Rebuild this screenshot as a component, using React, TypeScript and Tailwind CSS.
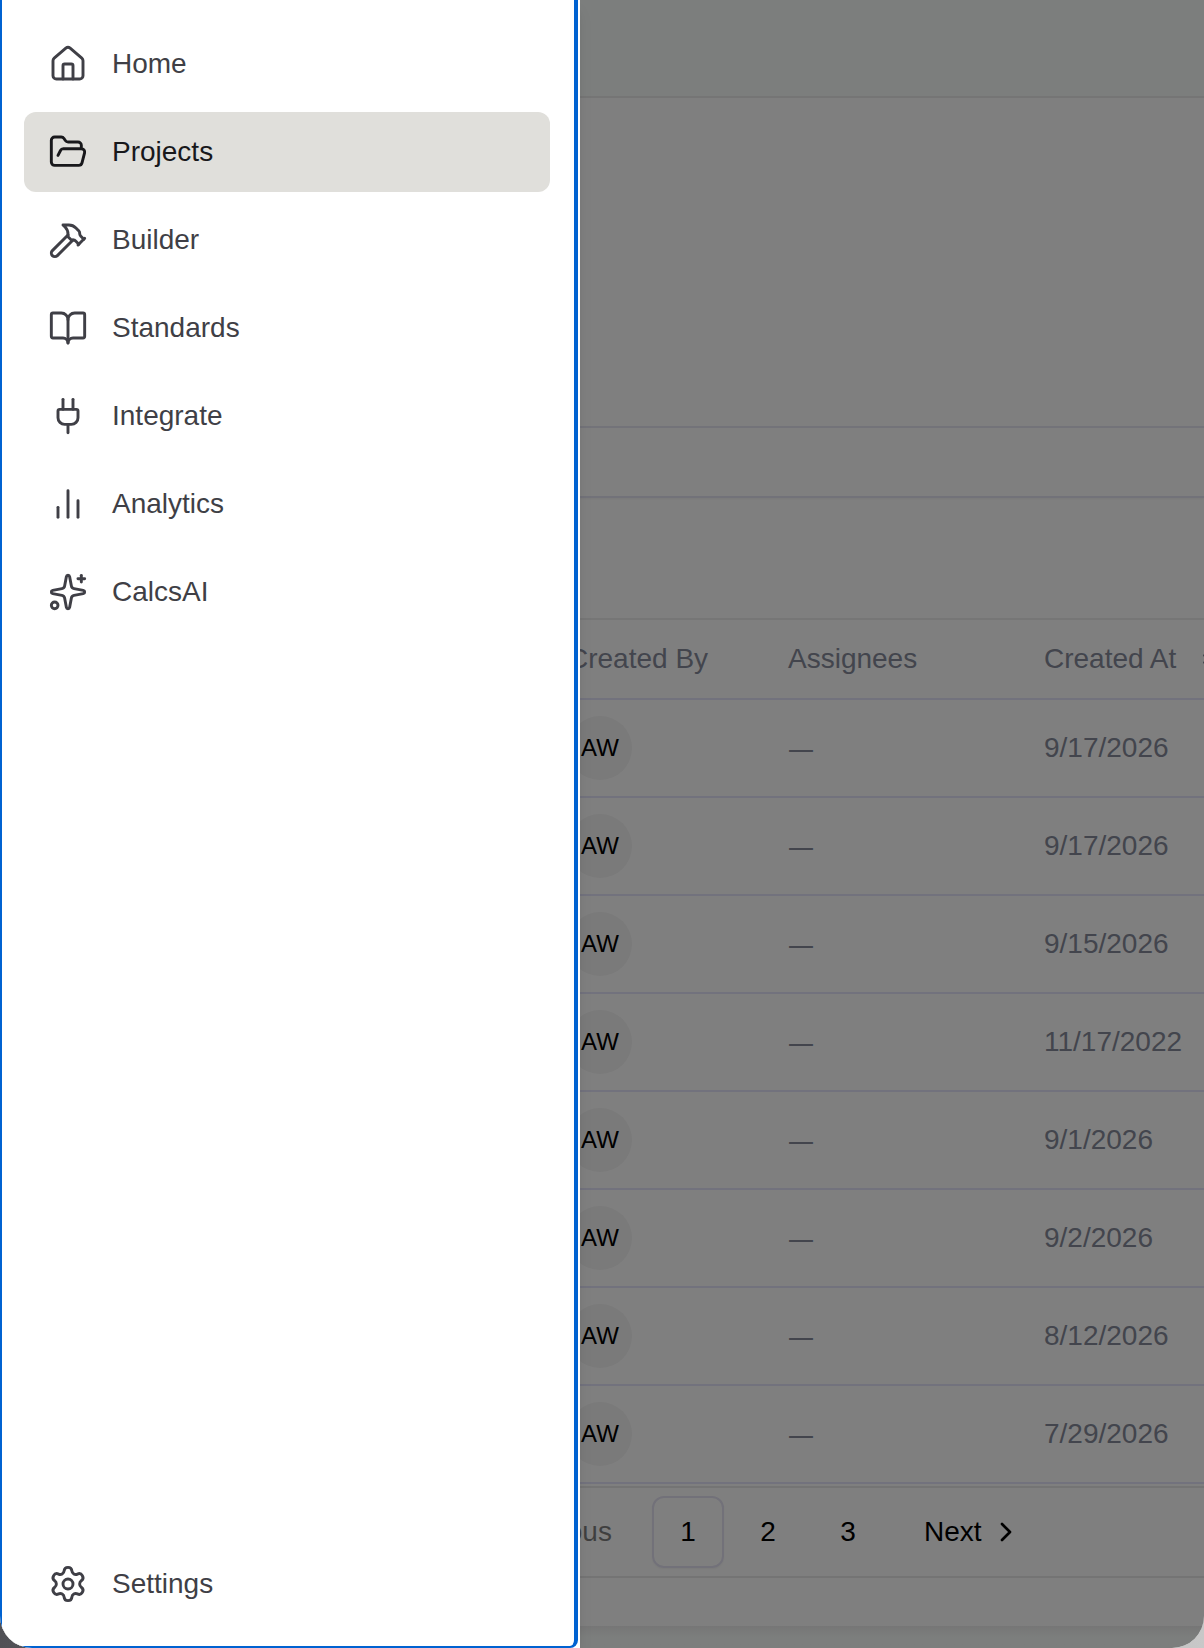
import React from 'react';
import {
  BookOpen,
  ChevronLeft,
  ChevronRight,
  ChevronsUpDown,
  FolderOpen,
  Hammer,
  House,
  Plug,
  Settings,
  Sparkles
} from 'lucide-react';

interface IconProps {
  className?: string;
  strokeWidth?: number;
}

interface NavItemProps {
  label: string;
  icon: React.ElementType<IconProps>;
  active?: boolean;
}

function BarsIcon({ className, strokeWidth = 2 }: IconProps) {
  return (
    <svg
      className={className}
      viewBox="0 0 24 24"
      fill="none"
      stroke="currentColor"
      strokeWidth={strokeWidth}
      strokeLinecap="round"
      strokeLinejoin="round"
      aria-hidden="true"
    >
      <path d="M18 20V10" />
      <path d="M12 20V4" />
      <path d="M6 20v-6" />
    </svg>
  );
}

const navItems: NavItemProps[] = [
  { label: 'Home', icon: House },
  { label: 'Projects', icon: FolderOpen, active: true },
  { label: 'Builder', icon: Hammer },
  { label: 'Standards', icon: BookOpen },
  { label: 'Integrate', icon: Plug },
  { label: 'Analytics', icon: BarsIcon },
  { label: 'CalcsAI', icon: Sparkles }
];

const rows = [
  { id: 1, createdBy: 'AW', createdAt: '9/17/2026' },
  { id: 2, createdBy: 'AW', createdAt: '9/17/2026' },
  { id: 3, createdBy: 'AW', createdAt: '9/15/2026' },
  { id: 4, createdBy: 'AW', createdAt: '11/17/2022' },
  { id: 5, createdBy: 'AW', createdAt: '9/1/2026' },
  { id: 6, createdBy: 'AW', createdAt: '9/2/2026' },
  { id: 7, createdBy: 'AW', createdAt: '8/12/2026' },
  { id: 8, createdBy: 'AW', createdAt: '7/29/2026' }
];

function NavItem({ label, icon: Icon, active }: NavItemProps) {
  return (
    <a
      href="#"
      aria-current={active ? 'page' : undefined}
      className={`flex h-20 items-center gap-6 rounded-xl px-6 ${
        active ? 'bg-[#e0dfdb] text-[#18181b]' : 'text-[#3f3f46]'
      }`}
    >
      <Icon className="size-10 shrink-0" strokeWidth={1.75} />
      <span>{label}</span>
    </a>
  );
}

function Drawer() {
  return (
    <aside className="absolute inset-y-0 left-0 w-[580px] max-w-full bg-white pr-0.5 shadow-lg">
      <div className="flex h-full flex-col justify-between rounded-br-lg border-y-0 border-r-4 border-b-2 border-l-2 border-[#0062d1] pt-6 pr-6 pb-[22px] pl-[22px]">
        <nav className="flex flex-col gap-2">
          {navItems.map((item) => (
            <NavItem key={item.label} {...item} />
          ))}
        </nav>
        <NavItem label="Settings" icon={Settings} />
      </div>
    </aside>
  );
}

function ProjectsTable() {
  return (
    <table className="w-full table-fixed border-separate border-spacing-0 text-left text-[#868b9b]">
      <thead>
        <tr className="h-20">
          <th className="w-[788px] border-b-2 border-[#e4e4fa] pl-[568px] font-normal">Created By</th>
          <th className="w-[256px] border-b-2 border-[#e4e4fa] font-normal">Assignees</th>
          <th className="border-b-2 border-[#e4e4fa] font-normal">
            <div className="flex items-center gap-5 whitespace-nowrap">
              Created At
              <ChevronsUpDown className="size-7 shrink-0" />
            </div>
          </th>
        </tr>
      </thead>
      <tbody>
        {rows.map((row) => (
          <tr key={row.id} className="h-[98px]">
            <td className="border-b-2 border-[#e4e4fa] pl-[568px]">
              <div className="flex size-16 items-center justify-center rounded-full bg-[#f4f4f4] text-2xl text-black">
                {row.createdBy}
              </div>
            </td>
            <td className="border-b-2 border-[#e4e4fa] font-['Noto_Sans',sans-serif] text-[26px]">—</td>
            <td className="border-b-2 border-[#e4e4fa]">{row.createdAt}</td>
          </tr>
        ))}
      </tbody>
    </table>
  );
}

function Pagination() {
  return (
    <nav
      aria-label="Pagination"
      className="mt-0.5 flex items-center gap-2 border-y-2 border-[#e8e8e8] py-2 pl-[443px] text-black"
    >
      <button disabled className="flex h-[72px] items-center gap-2 pr-8 pl-5 opacity-50">
        <ChevronLeft className="size-8" />
        Previous
      </button>
      <button className="size-[72px] rounded-xl border-2 border-[#e4e2f2] shadow-xs">1</button>
      <button className="size-[72px]">2</button>
      <button className="size-[72px]">3</button>
      <button className="flex h-[72px] items-center gap-2 pr-5 pl-8">
        Next
        <ChevronRight className="size-8" />
      </button>
    </nav>
  );
}

export default function App() {
  return (
    <div className="flex min-h-screen flex-col bg-linear-to-r from-[#505055] to-[#c8c8c8] font-['Liberation_Sans',Arial,sans-serif] text-[28px] leading-10">
      <div className="relative flex grow flex-col overflow-hidden rounded-b-[32px] bg-white">
        <header className="h-[98px] border-b-2 border-[#eaeaea] bg-[#f8fcfa]" />
        <main className="flex grow flex-col">
          <div className="h-[330px] border-b-2 border-[#e6e6f2]" />
          <div className="h-[70px] border-b-2 border-[#e4e4f2] shadow-xs" />
          <div className="h-[122px] border-b-2 border-[#ececec]" />
          <ProjectsTable />
          <Pagination />
          <div className="h-12" />
          <footer className="grow bg-linear-to-b from-[#ededed] to-[#f8fcfa] to-50%" />
        </main>
        <div className="absolute inset-0 bg-black/50" />
        <Drawer />
      </div>
    </div>
  );
}
